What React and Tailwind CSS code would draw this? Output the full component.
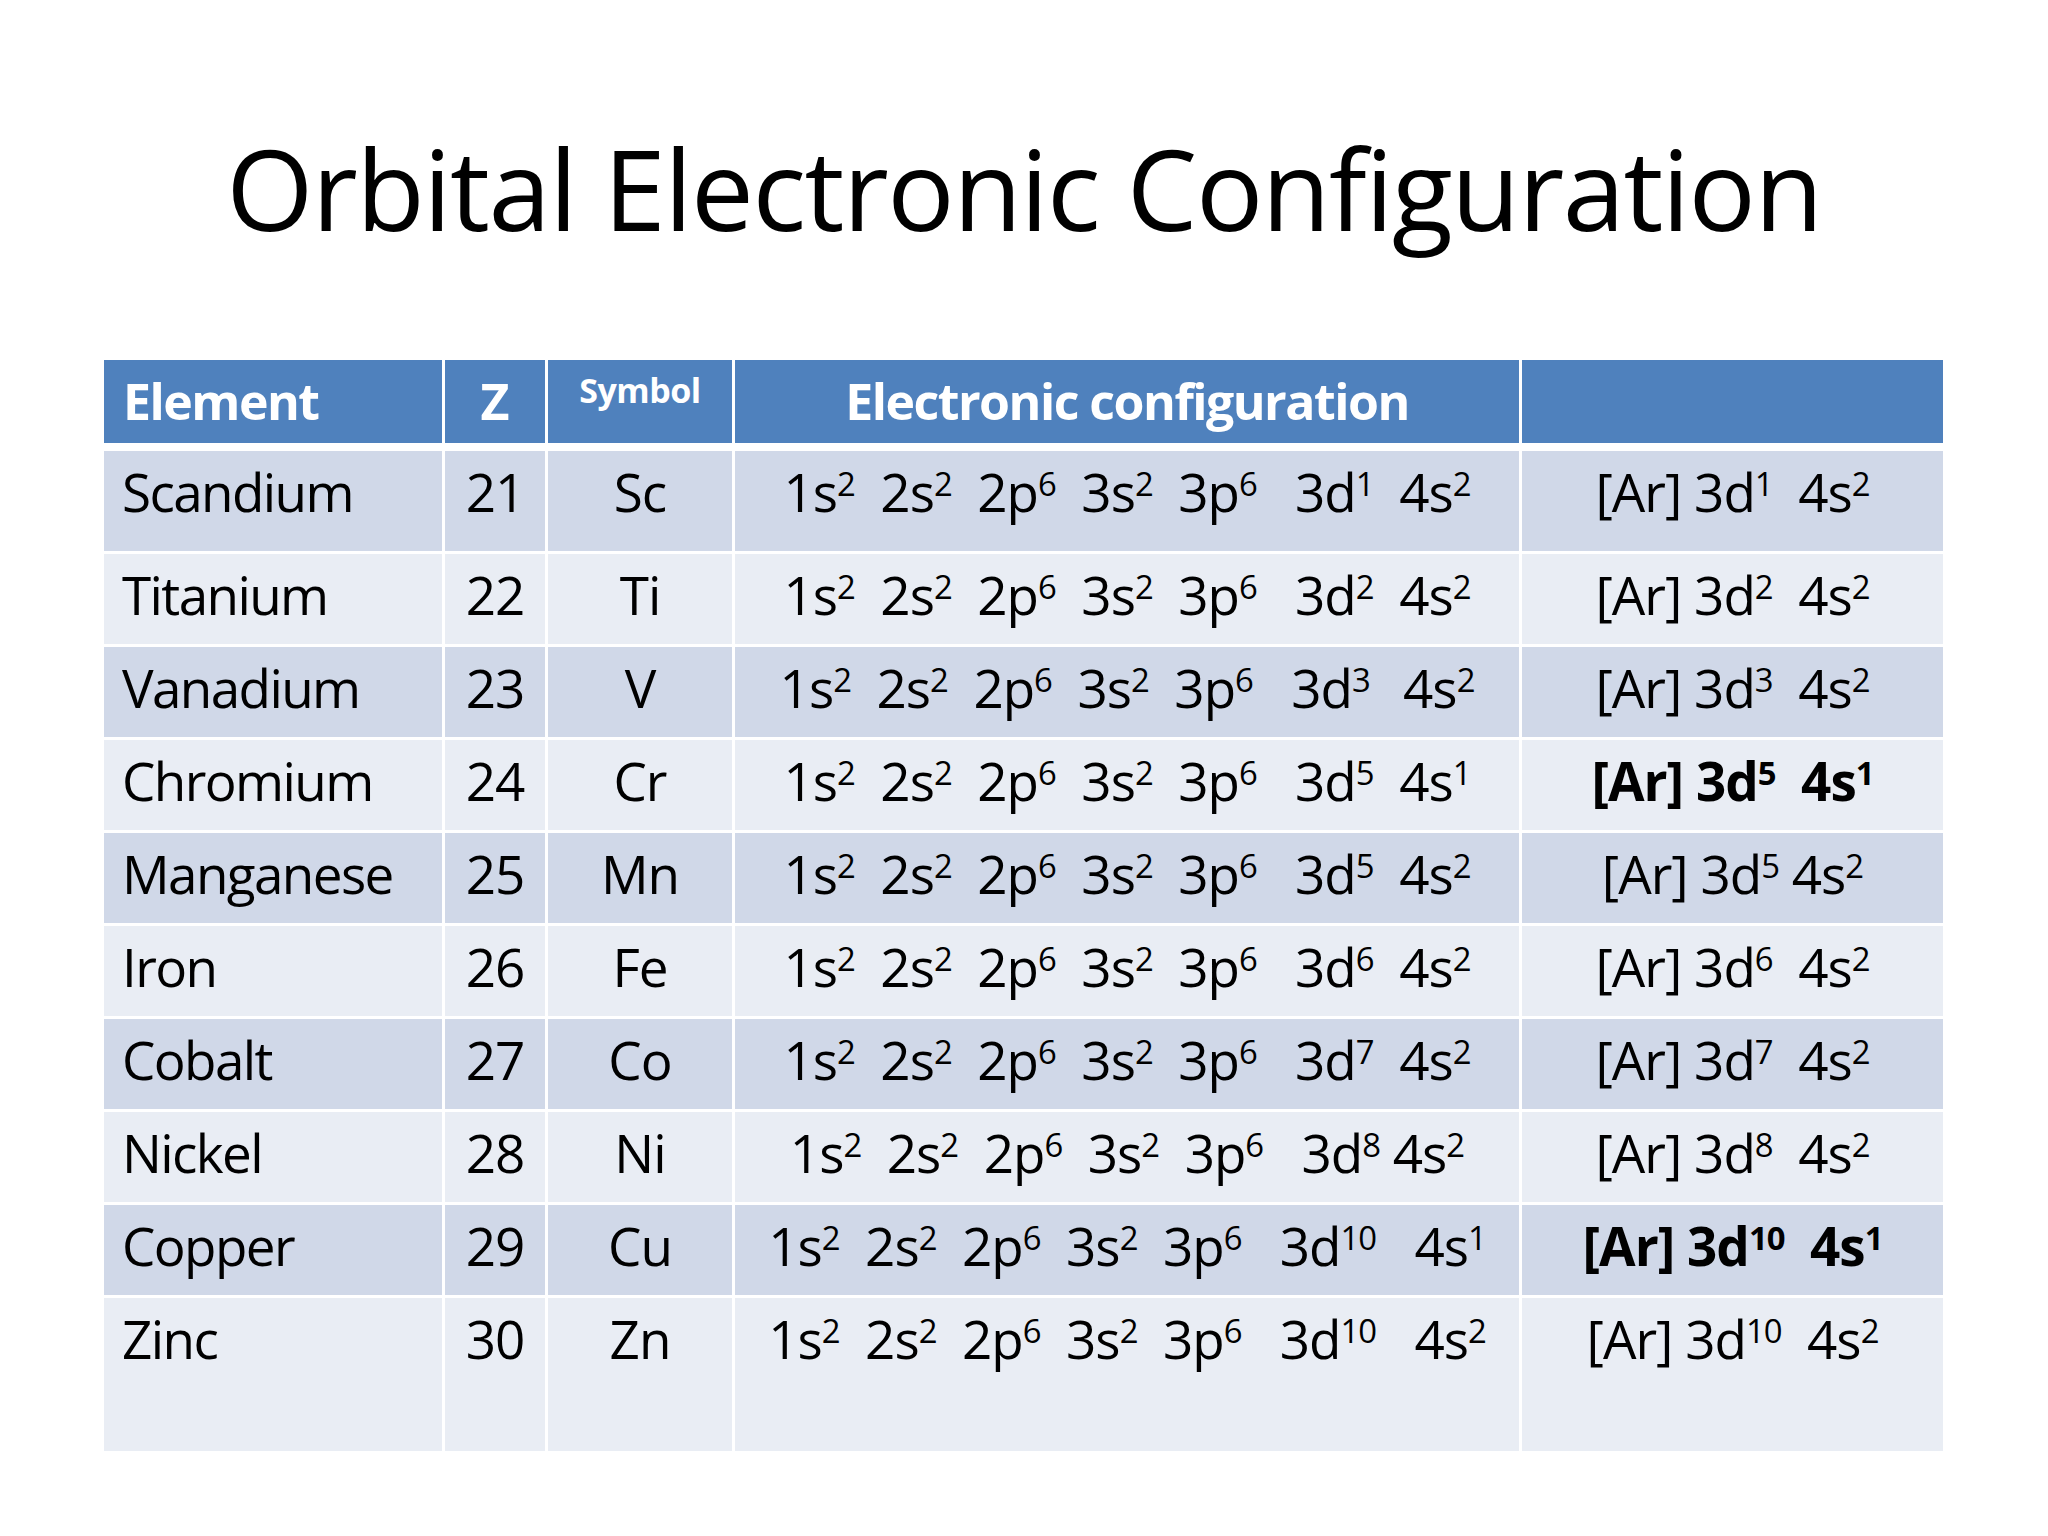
import React from 'react';

const rows = [
  { name: 'Scandium', z: 21, sym: 'Sc', cfg: '1s^2  2s^2  2p^6  3s^2  3p^6   3d^1  4s^2', ar: '[Ar] 3d^1  4s^2', h: 'h-[100px]' },
  { name: 'Titanium', z: 22, sym: 'Ti', cfg: '1s^2  2s^2  2p^6  3s^2  3p^6   3d^2  4s^2', ar: '[Ar] 3d^2  4s^2' },
  { name: 'Vanadium', z: 23, sym: 'V', cfg: '1s^2  2s^2  2p^6  3s^2  3p^6   3d^3  \u20094s^2', ar: '[Ar] 3d^3  4s^2' },
  { name: 'Chromium', z: 24, sym: 'Cr', cfg: '1s^2  2s^2  2p^6  3s^2  3p^6   3d^5  4s^1', ar: '[Ar] 3d^5  4s^1', bold: true },
  { name: 'Manganese', z: 25, sym: 'Mn', cfg: '1s^2  2s^2  2p^6  3s^2  3p^6   3d^5  4s^2', ar: '[Ar] 3d^5 4s^2' },
  { name: 'Iron', z: 26, sym: 'Fe', cfg: '1s^2  2s^2  2p^6  3s^2  3p^6   3d^6  4s^2', ar: '[Ar] 3d^6  4s^2' },
  { name: 'Cobalt', z: 27, sym: 'Co', cfg: '1s^2  2s^2  2p^6  3s^2  3p^6   3d^7  4s^2', ar: '[Ar] 3d^7  4s^2' },
  { name: 'Nickel', z: 28, sym: 'Ni', cfg: '1s^2  2s^2  2p^6  3s^2  3p^6   3d^8 4s^2', ar: '[Ar] 3d^8  4s^2' },
  { name: 'Copper', z: 29, sym: 'Cu', cfg: '1s^2  2s^2  2p^6  3s^2  3p^6   3d^10   4s^1', ar: '[Ar] 3d^10  4s^1', bold: true },
  { name: 'Zinc', z: 30, sym: 'Zn', cfg: '1s^2  2s^2  2p^6  3s^2  3p^6   3d^10   4s^2', ar: '[Ar] 3d^10  4s^2', h: 'h-[153px]' },
];

// "3d^5" -> 3d<sup>5</sup>
function Formula({ text }) {
  const parts = text.split(/\^(\d+)/);
  return (
    <span className="whitespace-pre">
      {parts.map((p, i) =>
        i % 2 ? <sup key={i} className="text-[62%]">{p}</sup> : <span key={i}>{p}</span>
      )}
    </span>
  );
}

const cols = 'grid grid-cols-[338px_100px_184px_784px_421px] gap-x-[3px]';

export default function App() {
  return (
    <div className="w-[2048px] h-[1536px] bg-white font-['Open_Sans',sans-serif] text-black">
      <h1 className="pt-[132px] text-center text-[112px] leading-none tracking-[-1.5px]">
        Orbital Electronic Configuration
      </h1>

      <div className="ml-[104px] mt-[116px] w-[1839px]">
        <div className={`${cols} h-[83px] text-white font-bold`}>
          <div className="bg-[#4f81bd] pl-[19px] pt-[16px] text-[50px] leading-none tracking-[-1.5px]">Element</div>
          <div className="bg-[#4f81bd] pt-[16px] text-center text-[50px] leading-none">Z</div>
          <div className="bg-[#4f81bd] pt-[13px] text-center text-[34px] leading-none tracking-[-0.5px]">Symbol</div>
          <div className="bg-[#4f81bd] pt-[16px] text-center text-[50px] leading-none tracking-[-1.5px]">Electronic configuration</div>
          <div className="bg-[#4f81bd]" />
        </div>

        <div className="mt-[8px] flex flex-col gap-y-[3px] text-[53px] leading-none tracking-[-1px]">
          {rows.map((r, i) => {
            const bg = i % 2 ? 'bg-[#e9edf4]' : 'bg-[#d0d8e8]';
            return (
              <div key={r.name} className={`${cols} ${r.h || 'h-[90px]'}`}>
                <div className={`${bg} pl-[18px] pt-[14px] tracking-[-1.6px]`}>{r.name}</div>
                <div className={`${bg} pt-[14px] text-center`}>{r.z}</div>
                <div className={`${bg} pt-[14px] text-center`}>{r.sym}</div>
                <div className={`${bg} pt-[14px] text-center`}><Formula text={r.cfg} /></div>
                <div className={`${bg} pt-[14px] text-center ${r.bold ? 'font-bold' : ''}`}><Formula text={r.ar} /></div>
              </div>
            );
          })}
        </div>
      </div>
    </div>
  );
}
